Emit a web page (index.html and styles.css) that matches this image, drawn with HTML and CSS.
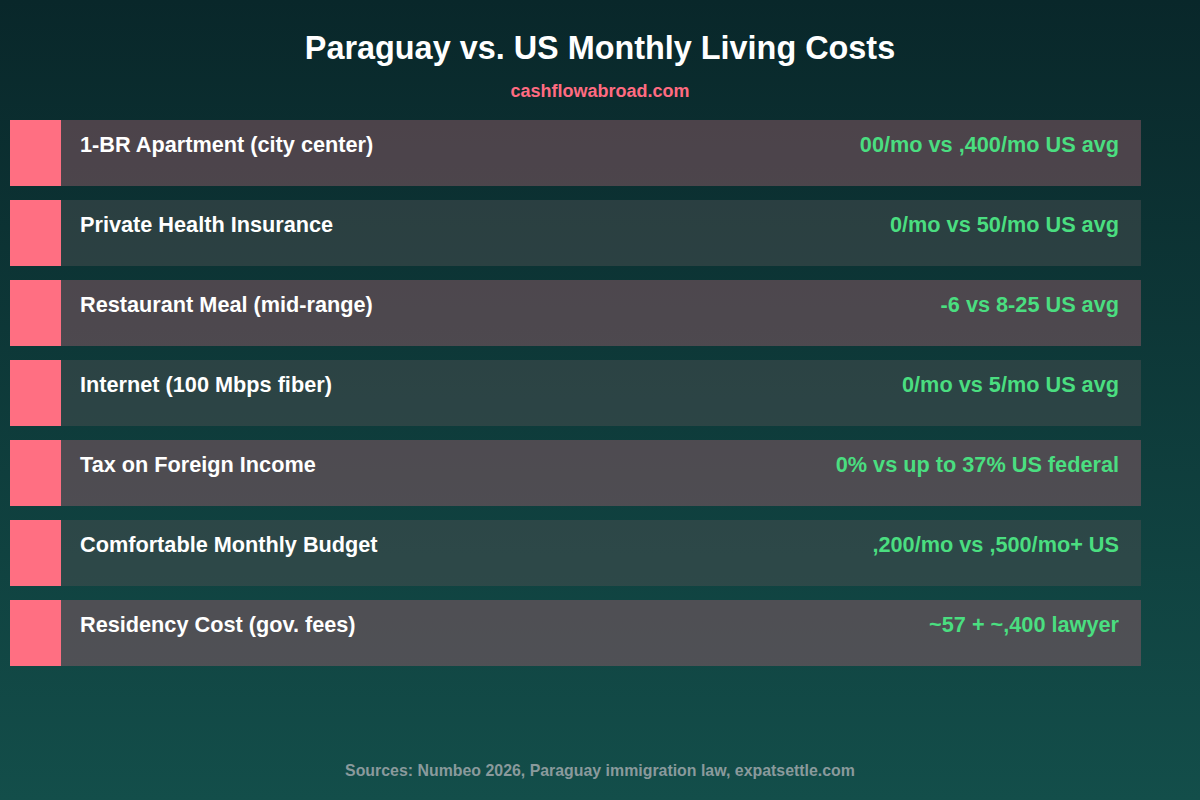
FILE: index.html
```html
<!DOCTYPE html>
<html>
<head>
<meta charset="utf-8">
<link rel="stylesheet" href="styles.css">
</head>
<body>
<div class="page">
  <h1 class="title">Paraguay vs. US Monthly Living Costs</h1>
  <div class="subtitle">cashflowabroad.com</div>
  <div class="rows">
    <div class="row row-a"><div class="bar"></div><div class="content"><span class="label">1-BR Apartment (city center)</span><span class="value">00/mo vs ,400/mo US avg</span></div></div>
    <div class="row row-b"><div class="bar"></div><div class="content"><span class="label">Private Health Insurance</span><span class="value">0/mo vs 50/mo US avg</span></div></div>
    <div class="row row-a"><div class="bar"></div><div class="content"><span class="label">Restaurant Meal (mid-range)</span><span class="value">-6 vs 8-25 US avg</span></div></div>
    <div class="row row-b"><div class="bar"></div><div class="content"><span class="label">Internet (100 Mbps fiber)</span><span class="value">0/mo vs 5/mo US avg</span></div></div>
    <div class="row row-a"><div class="bar"></div><div class="content"><span class="label">Tax on Foreign Income</span><span class="value">0% vs up to 37% US federal</span></div></div>
    <div class="row row-b"><div class="bar"></div><div class="content"><span class="label">Comfortable Monthly Budget</span><span class="value">,200/mo vs ,500/mo+ US</span></div></div>
    <div class="row row-a"><div class="bar"></div><div class="content"><span class="label">Residency Cost (gov. fees)</span><span class="value">~57 + ~,400 lawyer</span></div></div>
  </div>
  <div class="footer">Sources: Numbeo 2026, Paraguay immigration law, expatsettle.com</div>
</div>
</body>
</html>
```
FILE: styles.css
```css
html, body {
  margin: 0;
  padding: 0;
}
body {
  width: 1200px;
  height: 800px;
  background: linear-gradient(180deg, #09272a 0%, #134e4a 100%);
  font-family: "Liberation Sans", Arial, sans-serif;
  font-weight: bold;
  overflow: hidden;
}
.page {
  height: 800px;
  display: flex;
  flex-direction: column;
  box-sizing: border-box;
  padding: 30px 0 20px;
}
.title {
  margin: 0;
  text-align: center;
  color: #ffffff;
  font-size: 32.4px;
  line-height: 37px;
  font-weight: bold;
}
.subtitle {
  margin-top: 14px;
  text-align: center;
  color: #ff6b81;
  font-size: 18px;
  line-height: 21px;
}
.rows {
  margin-top: 18px;
  padding-left: 10px;
  display: flex;
  flex-direction: column;
  gap: 14px;
}
.row {
  width: 1131px;
  height: 66px;
  display: flex;
}
.row-a {
  background: rgba(142, 89, 101, 0.5);
}
.row-b {
  background: rgba(74, 78, 80, 0.5);
}
.bar {
  width: 51px;
  flex: none;
  background: #ff6f82;
}
.content {
  flex: 1;
  display: flex;
  justify-content: space-between;
  align-items: flex-start;
  padding: 12px 22px 0 19px;
  font-size: 21.7px;
  line-height: 25px;
}
.label {
  color: #ffffff;
}
.value {
  color: #4ade80;
}
.footer {
  margin-top: auto;
  text-align: center;
  color: #8a9a9c;
  font-size: 15.9px;
  line-height: 18px;
}
```
